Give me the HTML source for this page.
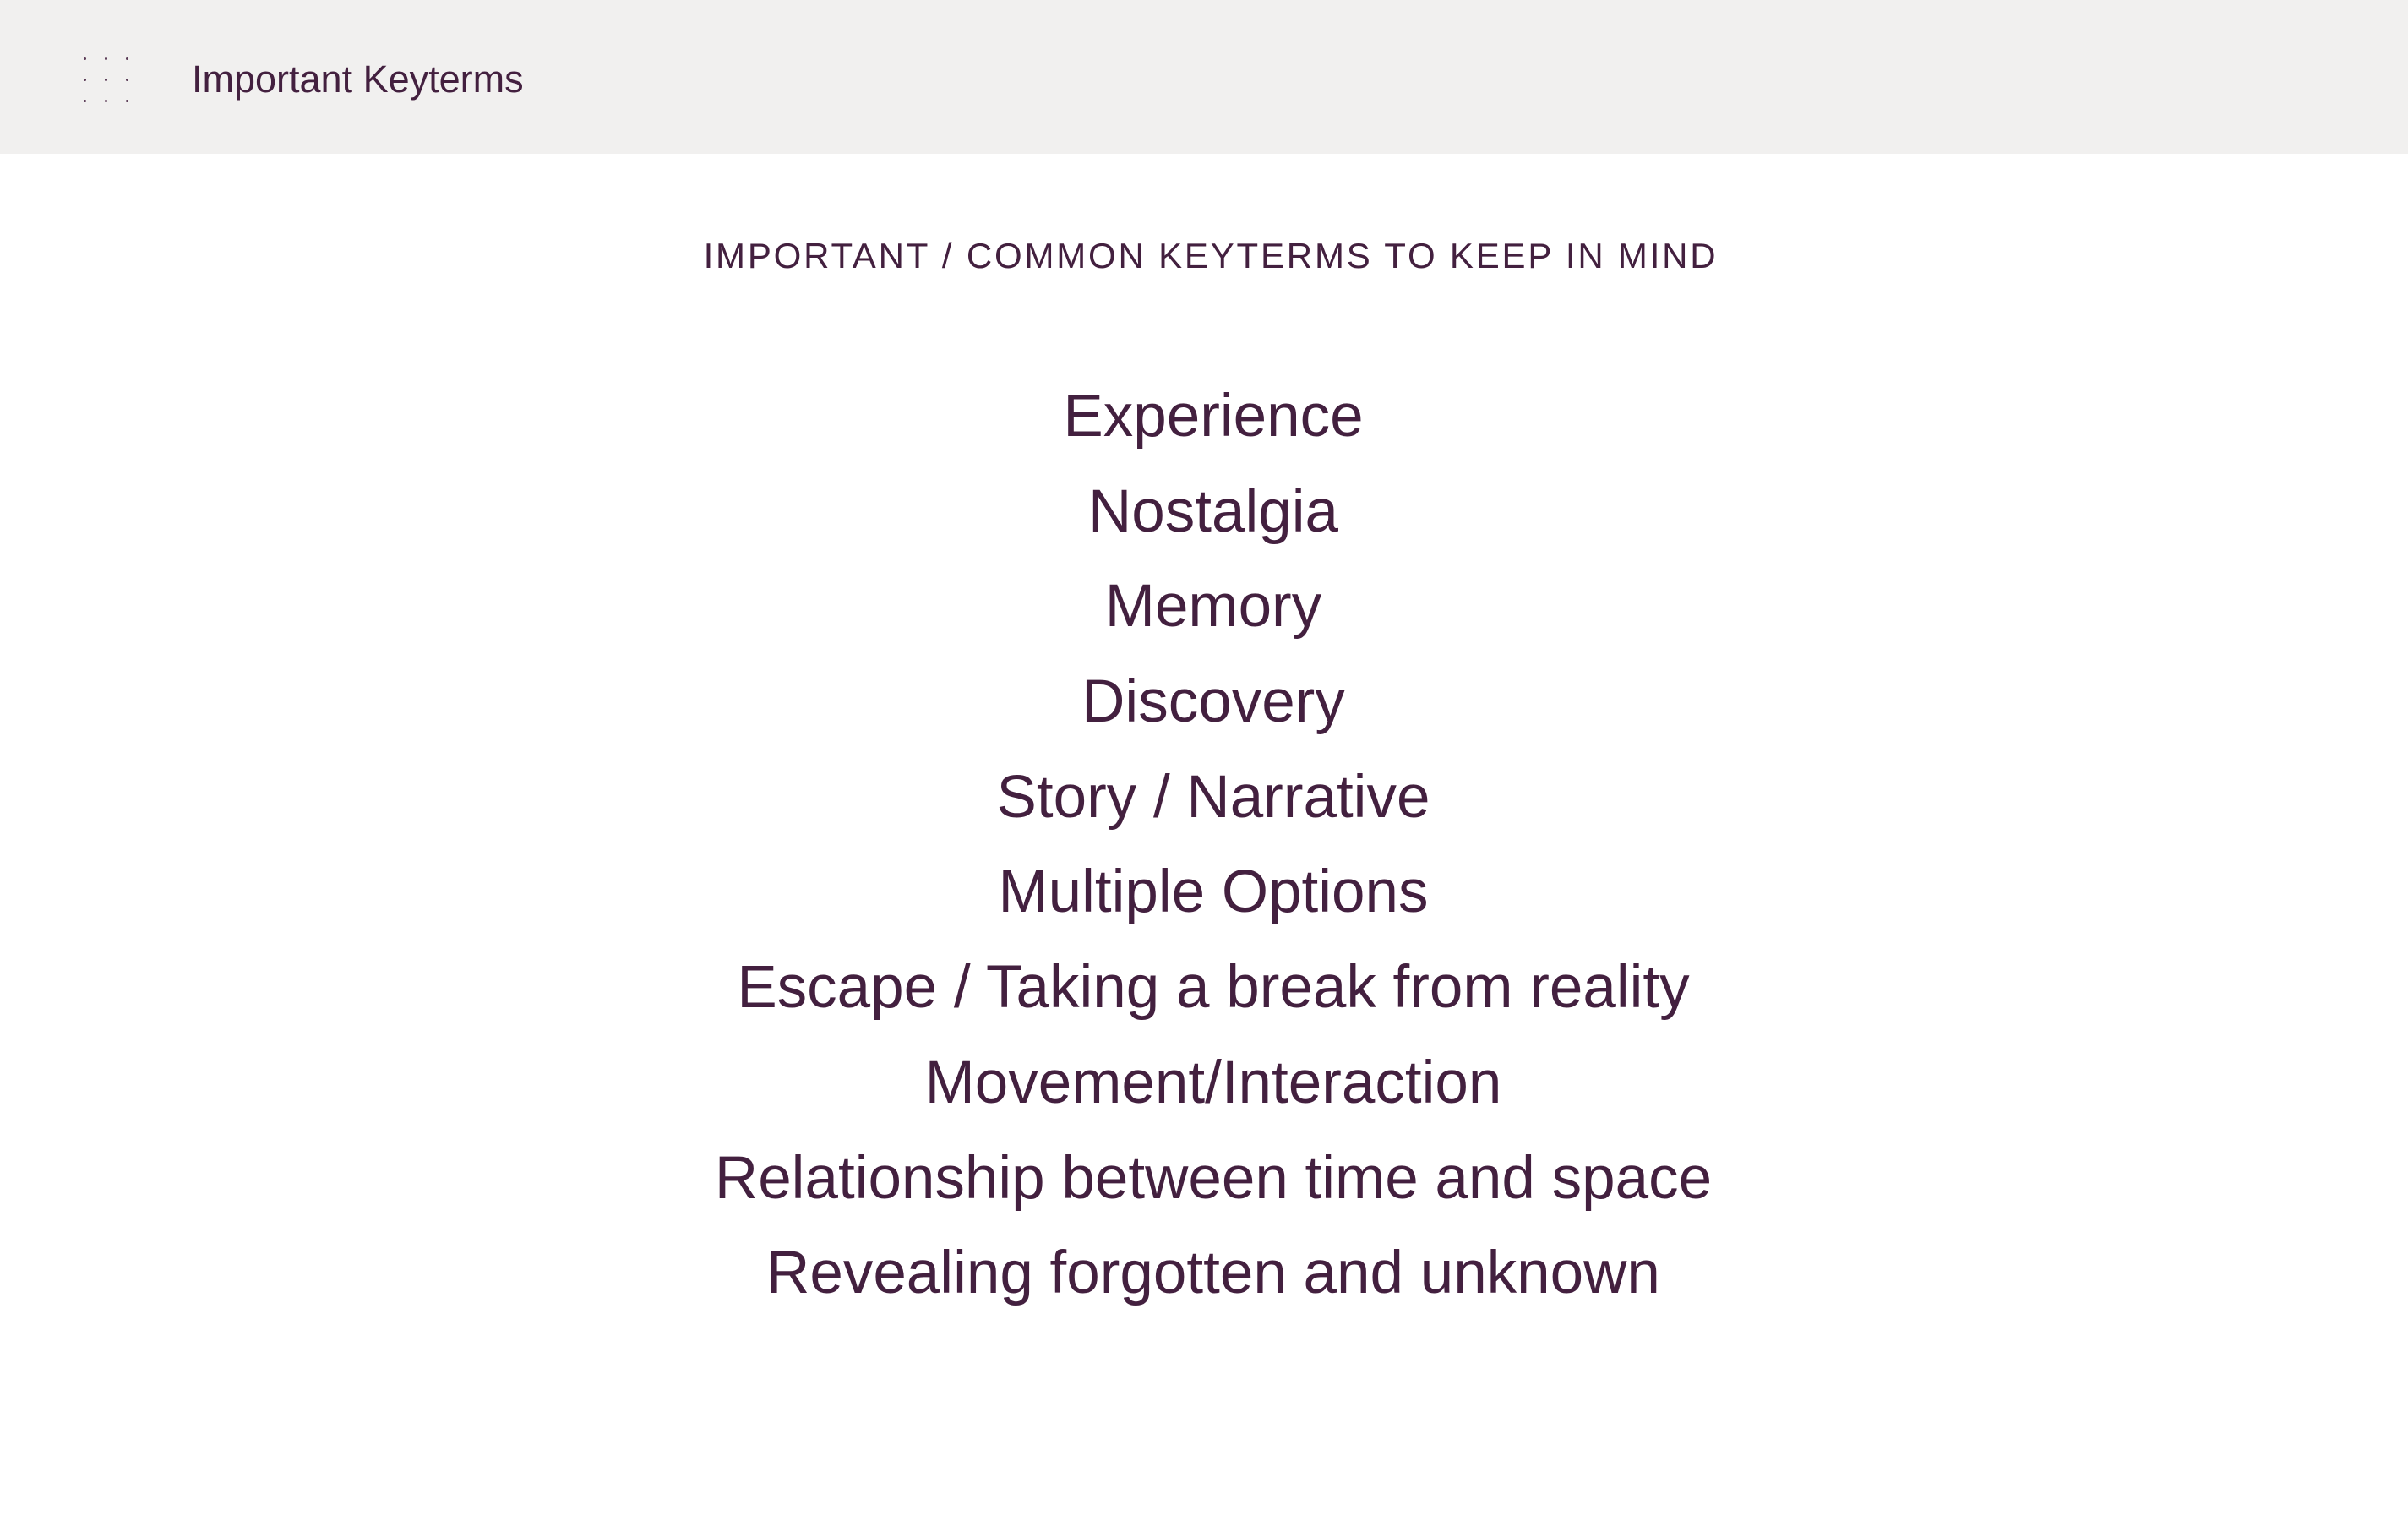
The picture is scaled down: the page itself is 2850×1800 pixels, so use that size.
<!DOCTYPE html>
<html><head><meta charset="utf-8"><style>
html,body{margin:0;padding:0;width:2850px;height:1800px;background:#fff;overflow:hidden;font-family:"Liberation Sans",sans-serif;color:#43203f;}
.hdr{position:absolute;left:0;top:0;width:2850px;height:182px;background:#f1f0ef;}
.dots{position:absolute;left:99px;top:68px;}
.dots i{position:absolute;width:3px;height:3px;border-radius:50%;background:#5a3a55;}
.title{position:absolute;left:227px;top:66px;font-size:45px;line-height:56px;color:#43203f;}
.sub{position:absolute;left:0;width:2850px;text-align:center;top:277px;font-size:42px;line-height:52px;letter-spacing:2.8px;padding-left:16px;box-sizing:border-box;}
.list{position:absolute;left:0;width:2850px;top:437px;text-align:center;font-size:71px;line-height:112.7px;padding-left:22px;box-sizing:border-box;}
.list div{height:112.7px;}
</style></head><body>
<div class="hdr">
<div class="dots">
<i style="left:0;top:0"></i><i style="left:25px;top:0"></i><i style="left:50px;top:0"></i>
<i style="left:0;top:25px"></i><i style="left:25px;top:25px"></i><i style="left:50px;top:25px"></i>
<i style="left:0;top:50px"></i><i style="left:25px;top:50px"></i><i style="left:50px;top:50px"></i>
</div>
<div class="title">Important Keyterms</div>
</div>
<div class="sub">IMPORTANT / COMMON KEYTERMS TO KEEP IN MIND</div>
<div class="list">
<div>Experience</div>
<div>Nostalgia</div>
<div>Memory</div>
<div>Discovery</div>
<div>Story / Narrative</div>
<div>Multiple Options</div>
<div>Escape / Taking a break from reality</div>
<div>Movement/Interaction</div>
<div>Relationship between time and space</div>
<div>Revealing forgotten and unknown</div>
</div>
</body></html>
